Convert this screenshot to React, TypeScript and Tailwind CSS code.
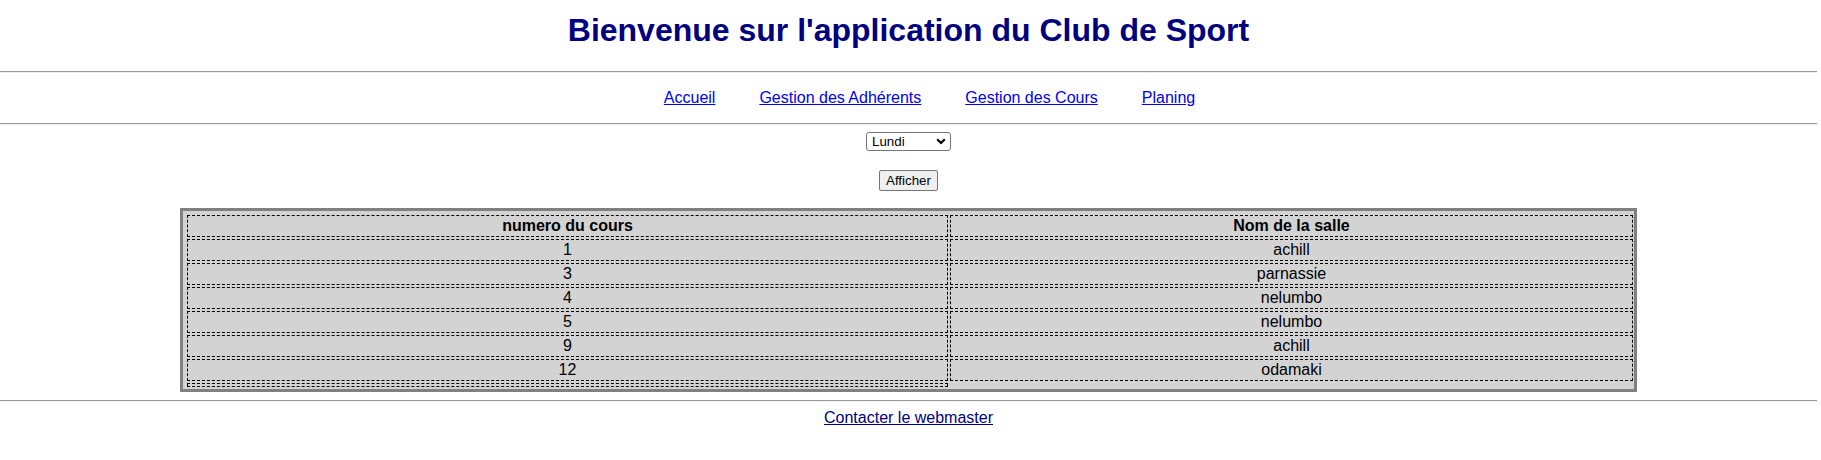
export default function App() {
  const links = ["Accueil", "Gestion des Adhérents", "Gestion des Cours", "Planing"];
  const left = ["1", "3", "4", "5", "9", "12"];
  const right = ["achill", "parnassie", "nelumbo", "nelumbo", "achill", "odamaki"];
  const cell =
    "h-[22px] border border-dashed border-black bg-[#d3d3d3] text-center text-[16px] leading-[20px] text-black whitespace-nowrap";
  const hr = "border-0 border-t border-b border-t-[#9a9a9a] border-b-[#eeeeee] h-0";

  return (
    <div className="min-h-[460px] w-full bg-white pt-[12px] pr-[4px] font-['Liberation_Sans',Arial,sans-serif] text-black">
      <h1 className="text-center text-[32px] font-bold leading-[37px] text-[#000080]">
        Bienvenue sur l'application du Club de Sport
      </h1>
      <hr className={"mt-[22px] " + hr} />
      <nav className="mt-[16px] flex justify-center gap-[44px] pl-[42px] text-[16px] leading-[18px]">
        {links.map((l) => (
          <a key={l} href="#" className="text-[#0000ee] underline">
            {l}
          </a>
        ))}
      </nav>
      <hr className={"mt-[16px] " + hr} />
      <div className="mt-[7px] flex justify-center">
        <div className="relative h-[19px] w-[85px]">
          <select className="block h-full w-full appearance-none rounded-[3px] border border-[#767676] bg-white pl-[5px] text-[13.33px] leading-[17px] text-black">
            <option>Lundi</option>
            <option>Mardi</option>
            <option>Mercredi</option>
            <option>Jeudi</option>
            <option>Vendredi</option>
            <option>Samedi</option>
          </select>
          <svg
            className="pointer-events-none absolute right-[5px] top-[6px]"
            width="10"
            height="7"
            viewBox="0 0 10 7"
          >
            <path d="M1.2 1.2 L5 5 L8.8 1.2" fill="none" stroke="#000" strokeWidth="2.2" />
          </svg>
        </div>
      </div>
      <div className="mt-[19px] flex justify-center">
        <button className="h-[21px] w-[59px] rounded-[2px] border border-[#767676] bg-[#efefef] text-[13.33px] leading-[17px] text-black">
          Afficher
        </button>
      </div>
      <div className="mx-auto mt-[17px] flex w-[1457px] items-start gap-[2px] border-[3px] border-[#808080] bg-[#d3d3d3] pt-[4px] pb-[2px] pl-[4px] pr-[1px]">
        <div className="flex w-[761px] flex-col gap-[2px]">
          <div className={cell + " font-bold"}>numero du cours</div>
          {left.map((v, i) => (
            <div key={i} className={cell}>
              {v}
            </div>
          ))}
          <div className="h-[4px] border border-dashed border-black" />
        </div>
        <div className="flex flex-1 flex-col gap-[2px]">
          <div className={cell + " font-bold"}>Nom de la salle</div>
          {right.map((v, i) => (
            <div key={i} className={cell}>
              {v}
            </div>
          ))}
        </div>
      </div>
      <hr className={"mt-[8px] " + hr} />
      <div className="mt-[7px] text-center text-[16px] leading-[18px]">
        <a href="#" className="text-[#000080] underline">
          Contacter le webmaster
        </a>
      </div>
    </div>
  );
}
